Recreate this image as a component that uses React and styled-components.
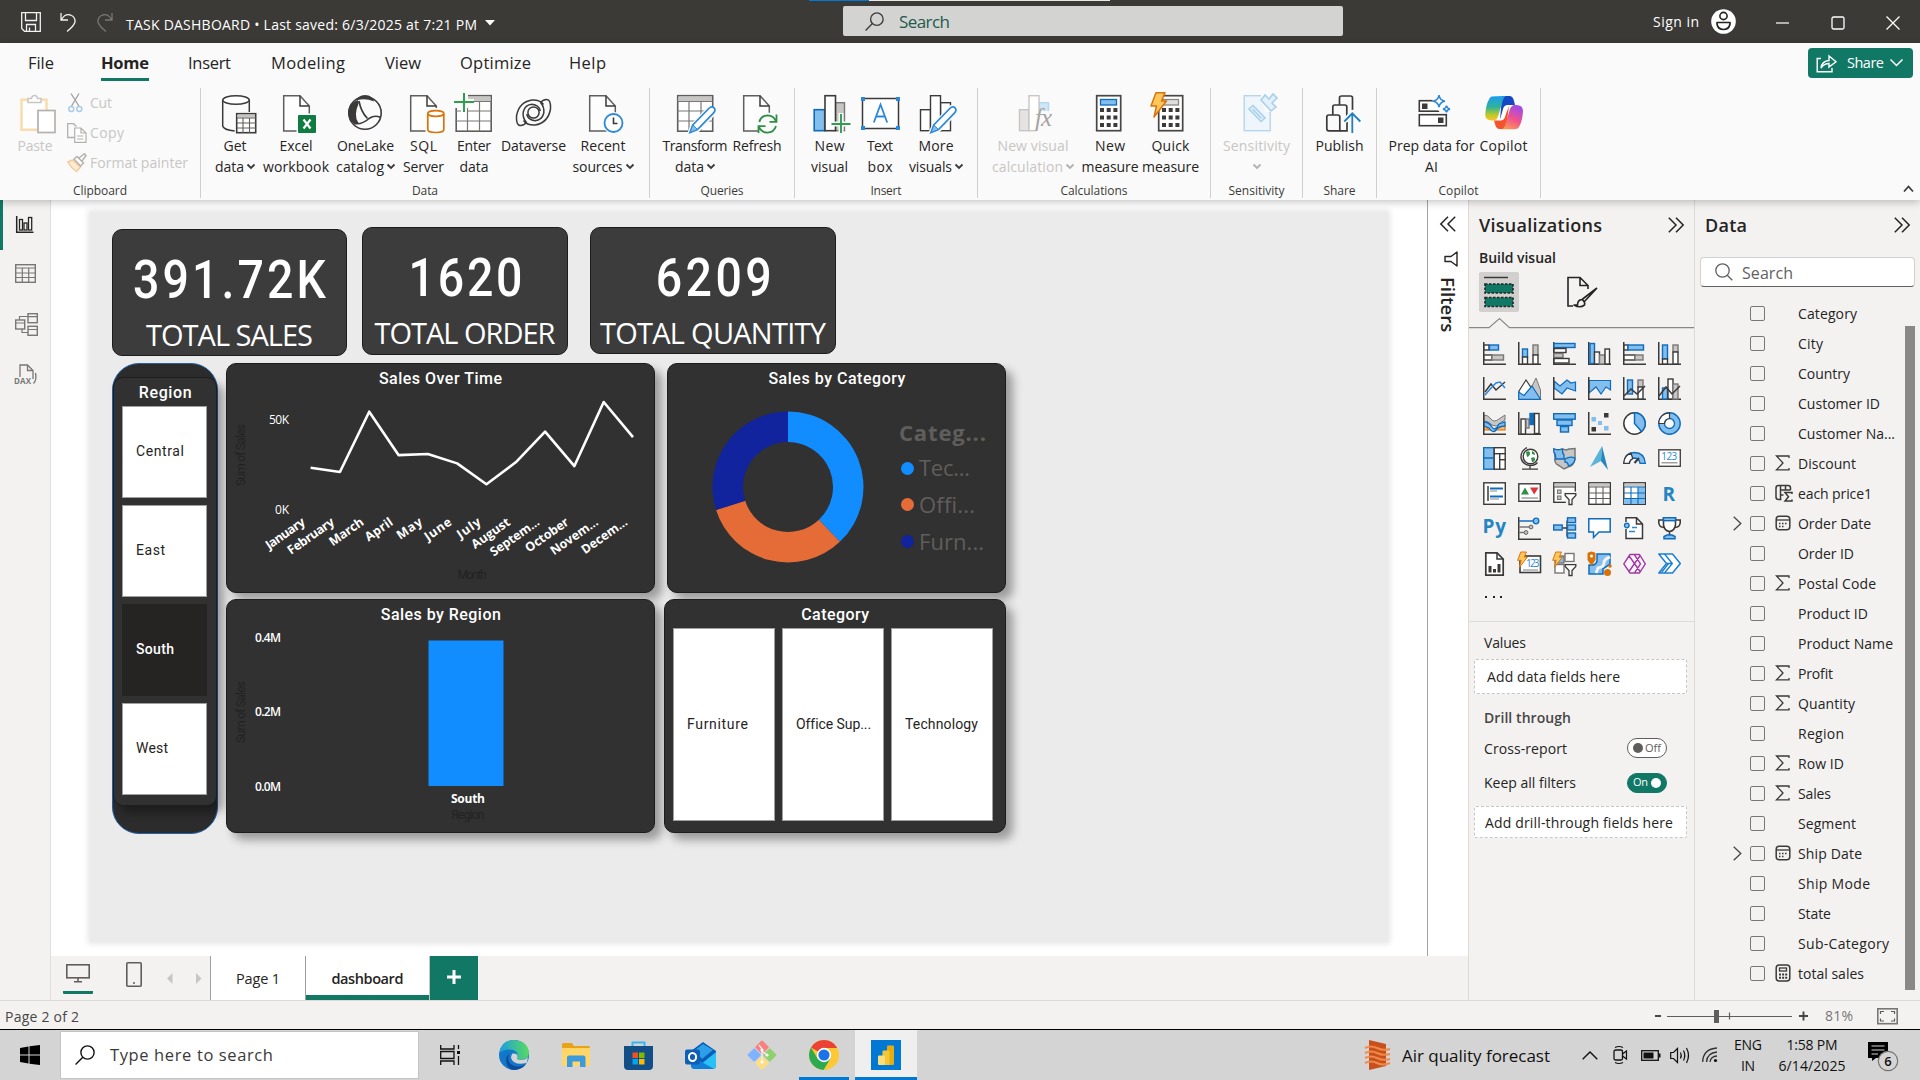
import React, { useLayoutEffect, useRef } from "react";
import styled, { createGlobalStyle, css } from "styled-components";

const INK = "#252423";
const DARK = "#3b3a39";
const GREEN = "#117865";
const PANEL = "#f3f2f1";
const BLUE = "#0f6cbd";
const SKY = "#83beec";
const GREY = "#c8c6c4";
const UI = '"Open Sans", "Noto Sans", sans-serif';
const DIN = 'Roboto, "Open Sans", sans-serif';

const Global = createGlobalStyle`
  * { box-sizing: border-box; }
  body { margin: 0; overflow: hidden; background: ${PANEL}; }
  #root { width: 1920px; height: 1080px; font-family: ${UI}; color: ${INK}; }
  svg { display: block; flex: none; overflow: visible; }
`;

/* ---------- text ---------- */

const TextSpan = styled.span`
  display: inline-block;
  flex: none;
  justify-self: start;
  white-space: pre;
  line-height: 1.36;
  font-family: ${(p) => (p.$din ? DIN : UI)};
  font-size: ${(p) => p.$size || 14}px;
  font-weight: ${(p) => p.$weight || 400};
  color: ${(p) => p.$color || "inherit"};
  margin-left: ${(p) => p.$ml || 0}px;
  padding-top: ${(p) => p.$drop || 0}px;
  ${(p) => p.$squeeze && css`transform: scaleX(${p.$squeeze});`}
`;

/* Tracks the text in or out so that it takes the given width. */
function Text({ fit, children, ...rest }) {
  const ref = useRef(null);
  const squeeze = rest.$squeeze || 1;
  useLayoutEffect(() => {
    const el = ref.current;
    if (!fit || !el) return;
    el.style.letterSpacing = "0px";
    const n = el.textContent.length;
    const s = (fit - el.getBoundingClientRect().width) / squeeze / Math.max(1, n - 1);
    el.style.letterSpacing = `${s}px`;
    el.style.marginRight = `${-s}px`;
  }, [fit, children, squeeze]);
  return (
    <TextSpan ref={ref} {...rest}>
      {children}
    </TextSpan>
  );
}

const VText = styled(TextSpan)`
  writing-mode: vertical-rl;
`;

/* ---------- shell ---------- */

const Window = styled.div`
  width: 1920px;
  height: 1080px;
  display: flex;
  flex-direction: column;
`;

const TitleBar = styled.header`
  height: 43px;
  flex: none;
  background: #3b3a37;
  color: #fff;
  display: flex;
  align-items: center;
  position: relative;
`;

const LoadStrip = styled.div`
  position: absolute;
  top: 0;
  left: 809px;
  width: 301px;
  height: 1px;
  background: linear-gradient(90deg, #0078d4 60px, #e8e8e8 60px);
`;

const Slot = styled.div`
  width: ${(p) => p.$w}px;
  margin-left: ${(p) => p.$ml || 0}px;
  margin-top: ${(p) => p.$mt || 0}px;
  flex: none;
  display: flex;
  align-items: center;
`;

const TitleSearch = styled.div`
  width: 500px;
  height: 30px;
  background: #d3d3d1;
  border-radius: 2px;
  display: flex;
  align-items: center;
  padding-left: 22px;
  gap: 15px;
  margin-top: -1px;
  color: #1f5a4d;
`;

const Ribbon = styled.section`
  height: 157px;
  flex: none;
  background: #fafafa;
  position: relative;
  z-index: 2;
  box-shadow: 0 2px 8px rgba(0, 0, 0, 0.24);
  display: flex;
  flex-direction: column;
`;

const TabRow = styled.nav`
  height: 45px;
  display: flex;
  align-items: flex-start;
  padding-left: 28px;
`;

const Tab = styled.div`
  width: ${(p) => p.$w}px;
  margin-right: ${(p) => p.$gap}px;
  height: 38px;
  padding-top: 9px;
  border-bottom: 3px solid ${(p) => (p.$active ? GREEN : "transparent")};
`;

const ShareButton = styled.button`
  width: 105px;
  height: 30px;
  margin: 5px 7px 0 auto;
  padding: 0 10px 0 8px;
  background: ${GREEN};
  border: 0;
  border-radius: 4px;
  color: #fff;
  display: flex;
  align-items: center;
  justify-content: space-between;
`;

const Groups = styled.div`
  flex: 1;
  display: flex;
  position: relative;
`;

const Group = styled.div`
  width: ${(p) => p.$w}px;
  height: 110px;
  border-right: 1px solid #d2d0ce;
  display: flex;
  flex-direction: column;
`;

const GroupItems = styled.div`
  height: 92px;
  padding-left: ${(p) => p.$pl}px;
  display: flex;
`;

const GroupCaption = styled.div`
  height: 18px;
  display: flex;
  justify-content: center;
  align-items: center;
  padding-top: 5px;
  margin-top: 2px;
  color: #3b3a39;
`;

const Item = styled.div`
  width: ${(p) => p.$w}px;
  flex: none;
  padding-top: 4px;
  display: flex;
  flex-direction: column;
  align-items: center;
  color: ${(p) => (p.$off ? "#c8c6c4" : "#252423")};
`;

const ItemLine = styled.div`
  height: 20px;
  display: flex;
  align-items: center;
  gap: 3px;
`;

const ClipCommands = styled.div`
  display: flex;
  flex-direction: column;
  margin-left: 9px;
  color: #c8c6c4;
`;

const ClipCommand = styled.div`
  height: 30px;
  display: flex;
  align-items: center;
  gap: 3px;
`;

const Collapse = styled.div`
  margin-left: auto;
  padding-right: 6px;
  align-self: flex-end;
  padding-bottom: 7px;
`;

const Body = styled.main`
  height: 800px;
  flex: none;
  display: flex;
`;

const Rail = styled.nav`
  width: 51px;
  background: ${PANEL};
  border-right: 1px solid #e1dfdd;
`;

const RailItem = styled.div`
  height: ${(p) => p.$h}px;
  display: flex;
  align-items: center;
  padding-left: 12px;
  border-left: 3px solid ${(p) => (p.$active ? GREEN : "transparent")};
`;

const Work = styled.div`
  width: 1417px;
  display: flex;
  flex-direction: column;
`;

const Stage = styled.div`
  height: 756px;
  display: flex;
  background: #fff;
`;

const CanvasArea = styled.div`
  width: 1377px;
  padding: 12px 0 0 39px;
  border-right: 1px solid #a5a4a2;
`;

/* The report page is a free canvas: each visual keeps the spot it was dropped on. */
const ReportPage = styled.div`
  width: 1298px;
  height: 730px;
  background: #ebebeb;
  box-shadow: 0 0 6px 2px #e6e6e6;
  position: relative;
`;

const Visual = styled.section`
  position: absolute;
  left: ${(p) => p.$box[0] - 90}px;
  top: ${(p) => p.$box[1] - 212}px;
  width: ${(p) => p.$box[2]}px;
  height: ${(p) => p.$box[3]}px;
  display: flex;
  flex-direction: column;
  border: 1px solid #1d1d1d;
  border-radius: 10px;
  background: #313131;
  box-shadow: 7px 7px 10px rgba(0, 0, 0, 0.34);
`;

const KpiCard = styled(Visual)`
  background: #3c3c3c;
  box-shadow: none;
  align-items: center;
  color: #fff;
`;

const KpiValue = styled.div`
  height: 50px;
  margin-top: 25px;
  display: flex;
  align-items: center;
`;

const KpiName = styled.div`
  height: 40px;
  margin-top: 10px;
  display: flex;
  align-items: center;
`;

const RoundedShape = styled(Visual)`
  border: 1px solid #1e62a8;
  border-radius: 27px;
  background: #2c2c2c;
  box-shadow: none;
`;

const VisualTitle = styled.div`
  height: 30px;
  flex: none;
  display: flex;
  align-items: center;
  justify-content: center;
  color: #fff;
`;

const TileList = styled.div`
  flex: 1;
  display: flex;
  flex-direction: ${(p) => (p.$row ? "row" : "column")};
  gap: ${(p) => p.$gap}px;
  margin-top: -2px;
  padding: ${(p) => p.$pad};
`;

const Tile = styled.div`
  flex: 1;
  display: flex;
  align-items: center;
  padding-left: 13px;
  background: ${(p) => (p.$on ? INK : "#fff")};
  color: ${(p) => (p.$on ? "#fff" : INK)};
  border: 1px solid ${(p) => (p.$on ? INK : "#a19f9d")};
`;

const DonutBody = styled.div`
  flex: 1;
  display: flex;
  padding: 17px 0 0 44px;
`;

const Legend = styled.div`
  padding: 5px 0 0 35px;
  display: flex;
  flex-direction: column;
  color: #605e5c;
`;

const LegendRow = styled.div`
  height: ${(p) => p.$h || 36.6}px;
  display: flex;
  align-items: center;
`;

const Dot = styled.i`
  width: 13px;
  height: 13px;
  border-radius: 50%;
  margin: 0 5px 0 2px;
  background: ${(p) => p.$c};
`;

const FilterRail = styled.aside`
  flex: 1;
  background: #fff;
  padding-top: 16px;
  display: flex;
  flex-direction: column;
  align-items: center;
`;

const PageTabs = styled.div`
  height: 44px;
  background: ${PANEL};
  display: flex;
`;

const ViewSwitch = styled.div`
  width: 159px;
  display: flex;
`;

const ViewMode = styled.div`
  width: 30px;
  height: 38px;
  margin-left: ${(p) => p.$ml}px;
  display: flex;
  justify-content: center;
  padding-top: ${(p) => p.$pt}px;
  border-bottom: 3px solid ${(p) => (p.$active ? GREEN : "transparent")};
  border-radius: 1px;
`;

const PageTab = styled.div`
  width: ${(p) => p.$w}px;
  background: #fff;
  border-left: 1px solid #a19f9d;
  display: flex;
  align-items: center;
  justify-content: center;
  padding-top: 2px;
  ${(p) => p.$active && css`box-shadow: inset 0 -5px 0 ${GREEN};`}
`;

const AddPage = styled.div`
  width: 49px;
  background: ${GREEN};
  border-left: 1px solid #c8c6c4;
  display: flex;
  justify-content: center;
  padding-top: 14px;
`;

const Pane = styled.aside`
  width: ${(p) => p.$w}px;
  background: ${PANEL};
  border-left: 1px solid #dddbd9;
  display: flex;
  flex-direction: column;
`;

const PaneHead = styled.div`
  height: 50px;
  flex: none;
  display: flex;
  align-items: center;
  justify-content: space-between;
  padding: 0 10px 0 10px;
`;

const BuildRow = styled.div`
  display: flex;
  padding: 5px 0 0 10px;
`;

const BuildTab = styled.div`
  width: 40px;
  height: 40px;
  margin-right: 43px;
  border-radius: 2px;
  background: ${(p) => (p.$active ? "#d2d0ce" : "transparent")};
  display: flex;
  align-items: center;
  justify-content: center;
`;

const IconGrid = styled.div`
  display: grid;
  grid-template-columns: repeat(6, 35px);
  grid-auto-rows: 35px;
  padding: 13px 0 0 14px;
  height: 259px;
`;

const Ellipsis = styled.div`
  height: 18px;
  padding-left: 16px;
  display: flex;
  gap: 5.5px;
  align-items: center;
  i {
    width: 2px;
    height: 2px;
    background: ${INK};
  }
`;

const Wells = styled.div`
  margin-top: 15px;
  border-top: 1px solid #dddbd9;
  padding: 10px 7px 0 5px;
  display: flex;
  flex-direction: column;
`;

const WellLabel = styled.div`
  height: ${(p) => p.$h}px;
  display: flex;
  align-items: center;
  justify-content: space-between;
  padding: 0 20px 0 10px;
`;

const Well = styled.div`
  height: ${(p) => p.$h}px;
  margin-top: ${(p) => p.$mt}px;
  background: #fff;
  border: 1px dashed #c8c6c4;
  border-radius: 2px;
  display: flex;
  align-items: center;
  padding-left: ${(p) => p.$pl}px;
`;

const Toggle = styled.div`
  width: 40px;
  height: 20px;
  border-radius: 10px;
  border: 1px solid ${(p) => (p.$on ? GREEN : "#605e5c")};
  background: ${(p) => (p.$on ? GREEN : "#fff")};
  color: ${(p) => (p.$on ? "#fff" : "#605e5c")};
  display: flex;
  flex-direction: ${(p) => (p.$on ? "row-reverse" : "row")};
  align-items: center;
  justify-content: space-between;
  padding: 0 5px;
  i {
    width: 10px;
    height: 10px;
    border-radius: 50%;
    background: currentColor;
  }
`;

const FieldSearch = styled.div`
  height: 30px;
  margin: 7px 5px 0 5px;
  background: #fff;
  border: 1px solid #d1d1d1;
  border-bottom-color: #616161;
  border-radius: 4px;
  display: flex;
  align-items: center;
  padding-left: 14px;
  gap: 9px;
  color: #616161;
`;

const FieldArea = styled.div`
  display: flex;
  justify-content: space-between;
  padding-right: 5px;
`;

const FieldList = styled.div`
  padding: 11px 0 0 38px;
`;

const Field = styled.div`
  height: 30px;
  display: grid;
  grid-template-columns: 17px 25px 23px auto;
  align-items: center;
`;

const Checkbox = styled.i`
  width: 15px;
  height: 15px;
  border: 1px solid #797775;
  border-radius: 2px;
`;

const Scroll = styled.div`
  width: 10px;
  height: 664px;
  margin-top: 39px;
  background: #8a8886;
`;

const StatusBar = styled.footer`
  height: 29px;
  flex: none;
  background: ${PANEL};
  border-top: 1px solid #dddbd9;
  display: flex;
  align-items: center;
  justify-content: space-between;
  padding: 2px 22px 0 5px;
  color: #484644;
`;

const Zoom = styled.div`
  display: flex;
  align-items: center;
`;

const Taskbar = styled.footer`
  height: 51px;
  flex: none;
  background: #d4d4d4;
  border-top: 1px solid #000;
  display: flex;
  align-items: center;
  color: #111;
`;

const TaskSearch = styled.div`
  width: 359px;
  height: 48px;
  margin-left: 20px;
  background: #fff;
  border: 1px solid #c4c4c4;
  display: flex;
  align-items: center;
  padding-left: 14px;
  gap: 15px;
`;

const TaskButton = styled.div`
  width: 62px;
  height: 50px;
  flex: none;
  display: flex;
  align-items: center;
  justify-content: center;
  background: ${(p) => (p.$active ? "#efefef" : "transparent")};
  ${(p) => p.$active && css`box-shadow: inset 0 -3px 0 #0078d4;`}
`;

const OpenMark = styled.div`
  width: 50px;
  height: 50px;
  display: flex;
  align-items: center;
  justify-content: center;
  box-shadow: inset 0 -3px 0 #0078d4;
`;

const Stack = styled.div`
  width: ${(p) => p.$w}px;
  margin-left: ${(p) => p.$ml}px;
  display: flex;
  flex-direction: column;
  align-items: center;
  gap: 2px;
`;

/* ---------- icon helpers ---------- */

const Svg = ({ w = 24, h = w, vb, children, ...r }) => (
  <svg width={w} height={h} viewBox={vb || `0 0 ${w} ${h}`} fill="none" {...r}>
    {children}
  </svg>
);
const P = ({ d, s = DARK, w = 1.5, f = "none", ...r }) => (
  <path d={d} stroke={s} strokeWidth={w} fill={f} {...r} />
);
const R = ({ b, s = DARK, w = 1.4, f = "none", ...r }) => (
  <rect x={b[0]} y={b[1]} width={b[2]} height={b[3]} stroke={s} strokeWidth={w} fill={f} {...r} />
);

const Chevron = ({ color = INK, w = 8, sw = 1.8 }) => (
  <Svg w={w} h={w * 0.6}>
    <P d={`M.5 .5L${w / 2} ${w * 0.5}L${w - 0.5} .5`} s={color} w={sw} />
  </Svg>
);
const Mirror = styled.div`
  transform: scaleX(-1);
`;
const Double = () => (
  <Svg w={16} h={16}>
    <P d="M.8 .8L8 8L.8 15.2M8 .8L15.2 8L8 15.2" s={INK} w={1.5} />
  </Svg>
);
const Lens = ({ w = 19, color = DARK, sw = 1.4 }) => (
  <Svg w={w} vb="0 0 20 20">
    <circle cx="12.5" cy="7.5" r="6.6" stroke={color} strokeWidth={sw} />
    <P d="M7.8 12.2L.6 19.4" s={color} w={sw} />
  </Svg>
);

/* ---------- ribbon icons, 44 x 44 ---------- */

const PageOutline = ({ x = 8 }) => (
  <>
    <P d={`M${x + 0.7} 3.7H${x + 17}L${x + 26.3} 14V39H${x + 0.7}Z`} f="#fdfdfd" s="#605e5c" w={1.5} />
    <P d={`M${x + 17} 3.7V14H${x + 26.3}`} s={DARK} />
  </>
);
const Pencil = () => (
  <g>
    <path d="M37 15.5L20 33L16.5 41L25 38L42 20Z" fill="#fafafa" stroke="#fafafa" strokeWidth="4" />
    <P d="M35.8 16.5q3-2.8 5.2-.6t-.6 5.2L24.5 37.5L17 40.5L19.8 33Z" f="#fff" s="#2b88d8" w={1.7} />
    <path d="M19.8 33L24.5 37.5L17 40.5Z" fill={SKY} stroke="#2b88d8" />
  </g>
);
const Table = ({ x = 4, head = GREY }) => (
  <g>
    <R b={[x + 0.7, 3.7, 35, 35.5]} f="#fff" s="#605e5c" w={1.6} />
    <rect x={x + 1.5} y="4.5" width="33.5" height="4.5" fill={head} />
    <P d={`M${x} 9.5H${x + 36}M${x} 19H${x + 36}M${x} 29H${x + 36}M${x + 12} 9.5V39M${x + 24} 9.5V39`} s="#797775" w={1.2} />
  </g>
);
const Calc = ({ x = 8, head = SKY, hs = BLUE }) => (
  <g>
    <R b={[x + 0.7, 3.7, 24, 35]} f="#fff" s="#484644" w={1.7} />
    <R b={[x + 4.5, 7.5, 16, 5.5]} f={head} s={hs} w={1.3} />
    {[16, 23.5, 31].map((y) =>
      [4, 10.7, 17.4].map((dx) => <rect key={`${y}${dx}`} x={x + dx} y={y} width="4" height="4" fill="#3b3a39" />)
    )}
  </g>
);
const Bolt = ({ t }) => (
  <path transform={t} d="M6 .8H15L11.5 9H16.5L4 25L6.5 14H1Z" fill="#ffc65a" stroke="#d8730a" strokeWidth="1.5" strokeLinejoin="round" />
);

const swirl = "M31.5 12.5Q28 7.6 20 8Q7 10 4.5 24Q4 33.8 8.5 33.5Q12.3 33.3 14.3 30.3Q10.5 26 11.2 20Q13 12.8 20 12.3Q27 13 28.3 19";

const ribbon = {
  getData: (
    <>
      <P d="M9.7 8V34q1 4 12 5M36.3 8V20" />
      <ellipse cx="23" cy="8" rx="13.3" ry="4.3" stroke={DARK} strokeWidth="1.5" fill="#fff" />
      <R b={[23.7, 21.7, 19, 19]} f="#fff" w={1.6} />
      <rect x="24.5" y="22.5" width="17.5" height="3" fill={GREY} />
      <P d="M24 26H43M24 31H43M24 36H43M30 26V41M36.5 26V41" s="#605e5c" w={1.1} />
    </>
  ),
  excel: (
    <>
      <PageOutline x={9} />
      <rect x="22.5" y="21.5" width="21" height="21" fill="#fafafa" />
      <rect x="24" y="23" width="18" height="18" rx="1" fill="#107c41" />
      <P d="M29.5 27.5L36.5 36.5M36.5 27.5L29.5 36.5" s="#fff" w={2.2} />
    </>
  ),
  onelake: (
    <>
      <circle cx="21" cy="21" r="16.2" stroke={DARK} strokeWidth="1.6" />
      <path d="M12.500 8.500Q13.500 3.500 21 3Q29 3.500 30 9.500Q21 5.500 12.500 8.500Z" fill={DARK} />
      <path d="M13.500 8Q5 11 4 20Q4.500 28 10.500 32L14.500 31Q9 24 15 10.500Z" fill={DARK} />
      <P d="M15 9Q17 20 23.500 26.500" w={1.600} />
      <P d="M10 31.500Q18 33 25 26.500Q31 22.500 36.500 25.500" w={1.600} />
    </>
  ),
  sql: (
    <>
      <PageOutline />
      <rect x="23.5" y="16" width="20" height="27" fill="#fafafa" />
      <P d="M25.8 21.5V37.5q0 3 8 3t8-3V21.5" s="#d8730a" w={1.7} f="#fff" />
      <ellipse cx="33.8" cy="21.5" rx="8" ry="2.8" stroke="#d8730a" strokeWidth="1.7" fill="#fff" />
    </>
  ),
  enter: (
    <>
      <Table x={3.5} />
      <path d="M2 0H16V16H2Z" fill="#fafafa" />
      <path d="M12 1V20M2 10H22" stroke="#fafafa" strokeWidth="6" />
      <P d="M12 1V20M2 10H22" s="#2f9e4f" w={2} />
    </>
  ),
  dataverse: (
    <g stroke={DARK} strokeWidth="1.5">
      <circle cx="21.5" cy="20.500" r="5.600" />
      <path d={swirl} />
      <path d={swirl} transform="rotate(180 21.5 20.500)" />
    </g>
  ),
  recent: (
    <>
      <PageOutline />
      <circle cx="32.5" cy="31" r="11" fill="#fafafa" />
      <circle cx="32.5" cy="31" r="9" fill="#fff" stroke="#2b88d8" strokeWidth="1.8" />
      <P d="M32.5 25.5V31.5H36.5" w={1.6} />
    </>
  ),
  transform: (
    <>
      <Table x={4} />
      <Pencil />
    </>
  ),
  refresh: (
    <>
      <PageOutline />
      <circle cx="32.5" cy="32" r="11.5" fill="#fafafa" />
      <P d="M24.3 30Q26 23.5 32.5 23.3Q39 23.5 41 29.5M41.5 22.5V29.8H34.5M41 34Q39 40.5 32.5 40.7Q26 40.5 24 34.8M23.5 41V34.2H30.5" s="#2f8f46" w={1.8} />
    </>
  ),
  newVisual: (
    <>
      <R b={[6.2, 17.7, 10.5, 21]} f={SKY} s={BLUE} w={1.6} />
      <R b={[27.5, 10.7, 9, 28]} f={GREY} s="#797775" />
      <R b={[17, 3.7, 10.5, 35]} f="#fff" w={1.6} />
      <path d="M33 21V43M23 32H43" stroke="#fafafa" strokeWidth="5" />
      <P d="M33 22V41M23.5 32H42.5" s="#2f9e4f" w={1.9} />
    </>
  ),
  textBox: (
    <>
      <R b={[4.5, 6.5, 36, 30]} f="#fff" w={1.5} />
      {[[3, 5], [38, 5], [3, 34], [38, 34]].map(([x, y]) => (
        <rect key={`${x}${y}`} x={x} y={y} width="4" height="4" fill="#2b88d8" />
      ))}
      <P d="M15.8 30.5L22.5 12.5L29.2 30.5M18.2 24.5H26.8" s="#2b88d8" w={1.8} />
    </>
  ),
  moreVisuals: (
    <>
      <R b={[6.5, 17.7, 10, 21]} f="#fff" />
      <R b={[26.5, 10.7, 10, 28]} f="#fff" />
      <R b={[16.5, 3.7, 10, 35]} f="#fff" />
      <Pencil />
    </>
  ),
  newCalc: (
    <>
      <R b={[8.5, 17.7, 9.5, 21]} f="#e6e4e2" s="#c8c6c4" />
      <R b={[28, 10.7, 9.5, 14]} f="#cfe6f7" s="#b5d6ee" />
      <R b={[18, 3.7, 10, 35]} f="#fff" s="#c8c6c4" />
      <rect x="25" y="19" width="18" height="22" fill="#fafafa" />
      <text x="24" y="34" fontFamily="Liberation Serif, serif" fontStyle="italic" fontSize="25" fill="#a6a4a2" textLength="17">fx</text>
    </>
  ),
  measure: <Calc />,
  quick: (
    <>
      <Calc x={9} head="#e1dfdd" hs="#8a8886" />
      <Bolt t="translate(1 0)" />
    </>
  ),
  sensitivity: (
    <>
      <R b={[9.2, 3.7, 26, 35]} f="#eef6fb" s="#b5d6ee" />
      <path d="M25 0H44V20H30Z" fill="#fafafa" />
      <P d="M14 17L18 13.5L30 26L26 29.5ZM17.5 17L26.5 26.5M26 8L30 3L34 7L38 2L42 6L37 11L41 15L36 19Z" s="#a9d0ea" w={1.6} f="#e3f1fa" />
    </>
  ),
  publish: (
    <>
      <path d="M8.8 37V25q0-2 2-2h9q2 0 2 2V38.8H10.8q-2 0-2-2Z" stroke={DARK} strokeWidth="1.7" />
      <P d="M14.8 23V15q0-2 2-2h10q2 0 2 2V26M21.8 38.8H29V30M21.5 13V6q0-2 2-2h9q2 0 2 2V18" w={1.7} />
      <path d="M34.3 20V42M26 29.5L34.3 21L42.6 29.5" stroke="#fafafa" strokeWidth="5" />
      <P d="M34.3 21V41M26.3 29.5L34.3 21.3L42.3 29.5" s="#1f7fbf" w={1.8} />
    </>
  ),
  prep: (
    <>
      <R b={[9.3, 8.7, 27, 10.5]} f="#fff" w={1.6} />
      <R b={[9.3, 22.7, 27, 11]} f="#fff" w={1.6} />
      <rect x="12" y="11.5" width="5.5" height="5.5" fill={DARK} />
      <rect x="28" y="25.5" width="5.5" height="5.5" fill={DARK} />
      <path d="M20 4H42V21H30Z" fill="#fafafa" />
      <P d="M29 3.2Q29.8 8.5 35 9.2Q29.8 10 29 15.2Q28.2 10 23 9.2Q28.2 8.5 29 3.2ZM36.5 13.5Q37 16.6 40 17Q37 17.5 36.5 20.5Q36 17.5 33 17Q36 16.6 36.5 13.5Z" s="#2b88d8" w={1.5} />
    </>
  ),
  copilot: (
    <>
      <defs>
        <linearGradient id="cpA" x1="0" y1="0" x2="0" y2="1">
          <stop offset="0" stopColor="#1a9cf0" />
          <stop offset="0.45" stopColor="#2fb39a" />
          <stop offset="0.75" stopColor="#b5c92e" />
          <stop offset="1" stopColor="#ffc41f" />
        </linearGradient>
        <linearGradient id="cpB" x1="0.6" y1="0" x2="0.2" y2="1">
          <stop offset="0" stopColor="#a14be8" />
          <stop offset="0.5" stopColor="#ee5091" />
          <stop offset="1" stopColor="#ff9a52" />
        </linearGradient>
      </defs>
      <path d="M20 4H28Q31 4.5 32 9L33 13H26Q22 13 21 17L18 28Z" fill="#1647c4" />
      <path d="M10 4.500Q12 4 24 4Q21.500 5 20 11L16.500 23Q15 28.500 11 28.500Q3 29 3.200 22Q4 12 7.500 6.500Q8.500 4.700 10 4.500Z" fill="url(#cpA)" />
      <path d="M24 37H17Q14 36.500 13 32L12 28.500H18Q22 28 23 24L27 14Z" fill="#f2552c" />
      <path d="M34 37Q32 37.300 20 37.300Q22.500 36 24 30.500L27.500 18.500Q29 13 33 13Q41 12.500 41 19Q40.500 29 37 35Q36 36.800 34 37Z" fill="url(#cpB)" />
      <path d="M22 17Q23 13 26.500 13L22.500 26Q21.500 28.500 18 28.500Z" fill="#fff" />
    </>
  ),
};

/* [icon, width, line one, its width, line two, its width, chevron, disabled] */
const GROUPS = [
  { w: 449, pl: 4, name: "Data", nw: 26, items: [
    ["getData", 60, "Get", 23, "data", 29, true],
    ["excel", 62, "Excel", 33, "workbook", 66],
    ["onelake", 77, "OneLake", 57, "catalog", 48, true],
    ["sql", 39, "SQL", 27, "Server", 41],
    ["enter", 62, "Enter", 34, "data", 29],
    ["dataverse", 57, "Dataverse", 65, "", 0],
    ["recent", 82, "Recent", 45, "sources", 50, true] ] },
  { w: 145, pl: 10, name: "Queries", nw: 43, items: [
    ["transform", 70, "Transform", 65, "data", 29, true],
    ["refresh", 54, "Refresh", 49, "", 0] ] },
  { w: 183, pl: 10, name: "Insert", nw: 31, items: [
    ["newVisual", 49, "New", 30, "visual", 37],
    ["textBox", 52, "Text", 26, "box", 25],
    ["moreVisuals", 60, "More", 35, "visuals", 43, true] ] },
  { w: 233, pl: 10, name: "Calculations", nw: 67, items: [
    ["newCalc", 90, "New visual", 71, "calculation", 71, true, true],
    ["measure", 64, "New", 30, "measure", 57],
    ["quick", 57, "Quick", 38, "measure", 57] ] },
  { w: 92, pl: 0, name: "Sensitivity", nw: 56, items: [["sensitivity", 91, "Sensitivity", 67, "", 0, true, true]] },
  { w: 74, pl: 0, name: "Share", nw: 32, items: [["publish", 73, "Publish", 48, "", 0]] },
  { w: 164, pl: 12, name: "Copilot", nw: 40, items: [
    ["prep", 85, "Prep data for", 86, "AI", 13],
    ["copilot", 59, "Copilot", 48, "", 0] ] },
];

/* ---------- visual gallery icons, 24 x 24 ---------- */

const Ax = <P d="M.75 0V22.2H23" w={1.5} />;
const bl = { f: SKY, s: BLUE };
const gr = { f: GREY, s: "#797775" };
const wh = { f: "#fff", s: DARK };
const Funnel = ({ t }) => (
  <path transform={t} d="M.7 .7H11.300V2.500L7.500 6.500V11.500H4.500V6.500L.7 2.500Z" fill="#fff" stroke={DARK} strokeWidth="1.3" />
);
const N123 = ({ x, y, size = 10, len = 16 }) => (
  <text x={x} y={y} fontFamily="Open Sans, sans-serif" fontSize={size} fill="#2b88d8" textLength={len}>123</text>
);

const gallery = [
  <>{Ax}<R b={[1, 3, 5, 5]} {...wh} /><R b={[6.5, 3, 9, 5]} {...bl} /><R b={[1, 13, 8, 5]} {...wh} /><R b={[9, 13, 11.500, 5]} {...gr} /></>,
  <>{Ax}<R b={[4.500, 7, 5, 8]} {...bl} /><R b={[4.500, 15, 5, 7]} {...wh} /><R b={[15, 3, 5, 10]} {...gr} /><R b={[15, 13, 5, 9]} {...wh} /></>,
  <>{Ax}<R b={[1, 1.500, 21, 4]} {...bl} /><R b={[1, 6.500, 12, 4]} {...wh} /><R b={[1, 11.500, 9, 4]} {...gr} /><R b={[1, 16.500, 15, 4.500]} {...wh} /></>,
  <>{Ax}<R b={[2, 1.500, 4.500, 20]} {...bl} /><R b={[6.500, 10, 5, 12]} {...wh} /><R b={[11.500, 13, 5.500, 9]} {...gr} /><R b={[17, 7, 4.500, 15]} {...wh} /></>,
  <>{Ax}<R b={[1, 3, 4, 5]} {...wh} /><R b={[5, 3, 15.500, 5]} {...bl} /><R b={[1, 13, 11, 5]} {...wh} /><R b={[12, 13, 8, 5]} {...gr} /></>,
  <>{Ax}<R b={[4.500, 3, 5, 14]} {...bl} /><R b={[4.500, 17, 5, 5]} {...wh} /><R b={[15, 3, 5, 7]} {...gr} /><R b={[15, 10, 5, 12]} {...wh} /></>,

  <>{Ax}<P d="M2 15L8 7L13 13L22 5" /><P d="M2 18L9 10L13 6L17 5L22 11" s="#2b88d8" /></>,
  <><P d="M13 11L18 1L22.500 13V22L15 17Z" f={GREY} s="#797775" w={1} /><P d="M1 14L8 3L14 12L8 18L1 20Z" f="#fff" w={1.200} /><P d="M.7 22.300V15L6 18.500L14 9L22.500 22.300Z" f={SKY} s={BLUE} w={1.200} /></>,
  <><P d="M1 4L7 9L14 3L18 6L22.500 5V14L14 11L9 17L1 11Z" f={SKY} s={BLUE} w={1.200} />{Ax}</>,
  <><P d="M1 3.500H22.500V13L18 10L13 17L8 10L1 16Z" f={SKY} s={BLUE} w={1.200} />{Ax}</>,
  <>{Ax}<R b={[4.500, 3, 5, 14]} {...bl} /><R b={[15, 3, 5, 7]} {...gr} /><R b={[15, 10, 5, 12]} {...wh} /><P d="M1 19L8 12L14 17L22 9" /></>,
  <>{Ax}<R b={[4.500, 11, 5, 11]} {...bl} /><R b={[10, 2, 5, 20]} {...wh} /><R b={[15, 7, 5, 15]} {...gr} /><P d="M1 19L8 10L14 17L22 9" /></>,

  <><P d="M1 3Q5 3 8 7T16 7L22 3V8Q18 10 15 13T5 10L1 9Z" f={GREY} s="#797775" w={1} /><P d="M1 12Q6 20 11 17T22 13V18H1Z" f="#fdb45b" s="#d8730a" w={1.200} /><P d="M1 10Q6 10 9 15T16 12L22 10V14Q16 14 13 18T6 16L1 14Z" f={SKY} s={BLUE} w={1.300} />{Ax}</>,
  <>{Ax}<R b={[3, 7, 4.500, 15]} {...wh} /><R b={[8, 7, 3, 9]} {...gr} /><R b={[12, 1.500, 4, 11]} f={BLUE} s={BLUE} /><R b={[16.500, 1.500, 4.500, 20]} {...wh} /></>,
  <><R b={[.7, 1.700, 21.500, 5.500]} {...bl} /><R b={[4, 8, 15, 5.500]} {...bl} /><R b={[7.500, 14.500, 8, 5.500]} {...bl} /></>,
  <>{Ax}<path d="M16 1h4.500v4.500H16ZM3.500 15H8v4.500H3.500Z" fill={DARK} /><path d="M3.500 5H8v4.500H3.500ZM10 9h4v4h-4ZM16 14h4.500v4.500H16Z" fill={SKY} /></>,
  <><circle cx="11.500" cy="11.500" r="10.700" fill="#fff" stroke={DARK} strokeWidth="1.500" /><P d="M11.500 .8A10.700 10.700 0 0 1 18.500 19.500L11.500 11.500Z" f={SKY} s={BLUE} /></>,
  <><circle cx="11.500" cy="11.500" r="7.800" stroke={SKY} strokeWidth="6" /><circle cx="11.500" cy="11.500" r="10.700" stroke={BLUE} strokeWidth="1.400" /><circle cx="11.500" cy="11.500" r="5" fill="#f8f8f8" stroke={BLUE} strokeWidth="1.300" /><P d="M.8 11.500A10.700 10.700 0 0 1 11.500 .8V6.500A5 5 0 0 0 6.500 11.500Z" w={1.200} f="#fff" /></>,

  <><R b={[.7, .7, 10.500, 21.500]} {...bl} /><R b={[11.200, .7, 11, 6]} {...wh} /><R b={[11.200, 6.700, 5.500, 15.500]} {...wh} /><R b={[16.700, 6.700, 5.500, 6]} {...wh} /><R b={[16.700, 12.700, 5.500, 9.500]} {...wh} /><P d="M1 11H11" s={BLUE} /></>,
  <><circle cx="12.500" cy="9.500" r="7.300" fill="#fff" stroke={DARK} strokeWidth="1.400" /><path d="M8 5Q12 3 12 6T9 10ZM13 11Q17 9 17 12T14 15ZM14 4q3 1 3 4l-3-1Z" fill="#2f8f46" /><P d="M9 .7Q2.500 3.500 3 11Q4.500 17.500 12 18.500Q17 18.500 19.500 15.500M12 18.500V22M4 22.200H20" w={1.300} /></>,
  <><P d="M1 2Q5 4 9 2L13 3L16 2L22 1.500V12Q21 19 15 20L11 22L5 18Q1 16 2 11Z" f={GREY} s="#797775" /><P d="M.8 2Q5 3.500 9.500 2Q9 6 11 8V12H2.500Q3 7 .8 5ZM12 12Q17 9 22 11Q22 17 15.500 19Q15 15 12 15Z" f={SKY} s={BLUE} w={1.300} /></>,
  <><path d="M14 -1L2 20L13 14Z" fill="#59b4d9" /><path d="M14 -1L20 23L13 14Z" fill="#2386c0" /></>,
  <><P d="M.8 16.300Q1.500 5.800 11.500 5.500Q21.500 5.800 22.300 16.300H17Q16.500 11.500 11.500 11Q7 11.500 6.300 16.300Z" f={SKY} s={BLUE} w={1.300} /><P d="M.8 16.300Q1 8.500 8 6.200L9.800 11.500Q6.500 13 6.300 16.300Z" f="#fff" w={1.300} /><P d="M11.500 16L16 11" w={2} /></>,
  <><R b={[.8, 2.800, 21.500, 16.500]} f="#fff" s="#484644" /><N123 x={3.300} y={12.500} /><P d="M3.500 15.800H19.500" s="#8a8886" w={1.200} /></>,

  <><R b={[.8, .8, 21.500, 21.500]} f="#fff" /><P d="M5 4V19" w={1.500} /><P d="M7 6.500H20M7 14.500H20" s={BLUE} w={2} /><P d="M7 9H14M7 17H16" s="#8a8886" w={1} /></>,
  <><R b={[.8, 1.800, 21.500, 17.500]} f="#fff" /><path d="M3 12.500L7 5.500L11 12.500Z" fill="#2f8f46" /><path d="M12 5.500H20.500L16.200 12.500Z" fill="#e0343c" /><P d="M3.500 16H20" s="#8a8886" w={1.200} /></>,
  <><R b={[.8, .8, 21.500, 19.500]} f="#fff" /><rect x="1.500" y="1.500" width="20" height="3" fill={GREY} /><P d="M1 5H22" s="#605e5c" w={1.200} /><R b={[4.500, 8, 3.500, 3.500]} {...gr} w={1.100} /><R b={[4.500, 14, 3.500, 3.500]} {...gr} w={1.100} /><path d="M9.500 9.500H24V24H14Z" fill={PANEL} /><Funnel t="translate(11.500 11)" /></>,
  <><R b={[.8, .8, 21.500, 21.500]} f="#fff" /><rect x="1.500" y="1.500" width="20" height="3" fill={GREY} /><P d="M1 5H22M1 11H22M1 16.500H22M8 5V22M15 5V22" s="#605e5c" w={1.100} /></>,
  <><R b={[.8, .8, 21.500, 21.500]} f="#fff" /><rect x="1.500" y="1.500" width="20" height="3" fill={GREY} /><path d="M15 5h7v17H1v-5.500h14Z" fill={SKY} /><P d="M1 5H22M1 11H22M1 16.500H22M8 5V22M15 5V22" s={BLUE} w={1.100} /></>,
  <text x="4.500" y="18.500" fontFamily="Open Sans, sans-serif" fontWeight="700" fontSize="19" fill="#2386c0" textLength="12">R</text>,

  <text x="-.5" y="15.500" fontFamily="Open Sans, sans-serif" fontWeight="700" fontSize="19" fill="#2386c0" textLength="23.500">Py</text>,
  <>{Ax}<P d="M1 4H15" s={BLUE} /><circle cx="18" cy="4" r="2.800" fill={SKY} stroke={BLUE} strokeWidth="1.300" /><P d="M1 10H11M1 15.500H6" s="#797775" w={1.300} /><circle cx="13" cy="10" r="1.900" fill={GREY} stroke="#605e5c" /><circle cx="8" cy="15.500" r="1.900" fill={GREY} stroke="#605e5c" /></>,
  <><P d="M9 11H14M14 3.500V19H16M14 3.500H16M14 11H16" w={1.300} /><R b={[.7, 8, 8.500, 5]} {...bl} /><R b={[14.500, .8, 8, 4.800]} {...bl} /><R b={[14.500, 8, 8, 5]} {...bl} /><R b={[14.500, 16, 8, 5]} {...bl} /></>,
  <P d="M.8 1.800H22.200V15H11L5.500 20.500V15H.8Z" f="#fff" s={BLUE} />,
  <><P d="M3 5V.8H13.500L19.500 7V21.500H3V12" f="#fff" /><P d="M13.500 .8V7H19.500" /><circle cx="3.800" cy="8.500" r="2.300" fill={SKY} stroke={BLUE} strokeWidth="1.300" /><P d="M9 10.500H14M6 14.500H12" s="#2b88d8" /></>,
  <><P d="M5.500 1V8Q6.500 14 11.500 14.500Q16.500 14 17.500 8V1ZM5.500 3H.8V6Q1.500 10.500 6 10.500M17.500 3H22.200V6Q21.500 10.500 17 10.500M11.500 14.500V18" f="#fff" w={1.600} /><R b={[5.500, .7, 12, 3]} {...bl} /><P d="M6 21.700V19.500L9 18H14L17 19.500V21.700Z" f={SKY} s={BLUE} /></>,

  <><P d="M2.800 .8H14L20.200 7V23.200H2.800Z" f="#fff" w={1.700} /><P d="M14 .8V7H20.200" /><path d="M5.500 14H8.500V20.500H5.500ZM10 17h3v3.500h-3ZM14.500 12h3v8.500h-3Z" fill={DARK} /></>,
  <><R b={[2, 4, 20.500, 16.500]} f="#fff" w={1.600} /><N123 x={8} y={15} len={13.500} /><P d="M5 18H20" s="#8a8886" w={1.100} /><Bolt t="translate(-1 -.5) scale(.63)" /></>,
  <><R b={[12, 1.500, 9, 8]} s="#797775" f="#fff" /><R b={[2, 12.500, 9, 8.500]} s="#797775" f="#fff" /><R b={[2, 4, 9, 7]} f={SKY} s="#797775" /><path d="M11.500 10.500H24V24H14Z" fill={PANEL} /><Funnel t="translate(11.500 12)" /><Bolt t="translate(-1 -.5) scale(.63)" /></>,
  <><P d="M9 2H22V12L15 17V22H1V13Q8 14 9 9Z" f={SKY} s={BLUE} /><P d="M22 5Q16 7 16 11T10 16L8 21" s="#f3f2f1" w={3} /><path d="M-.5 1Q3.500 -2 7.500 1V8L3.500 14L-.5 8Z" fill="#d8730a" /><circle cx="3.500" cy="4" r="1.500" fill="#fff" /><circle cx="19.500" cy="20.500" r="3.500" fill="#d8730a" /><circle cx="22" cy="14" r="1.800" fill="#d8730a" /></>,
  <P d="M7 2.500H16.500L22.300 11.800L16.500 21H7L.8 11.800ZM6.200 4L17 19.500M16.800 4L6 19.500M11.500 2.800L17.500 11.800L11.500 20.800M11.500 2.800" s="#9f3aa0" f="#fbf2fb" w={1.400} strokeLinejoin="round" />,
  <><P d="M.8 2H14.500L22.300 11.500L14.500 21H.8L8.500 11.500Z" s="#1a7fd4" f="#fff" strokeLinejoin="round" /><P d="M6.500 2L14.300 11.500L6.500 21M8.500 11.500H14M10.500 11.500L3.500 20.500" s="#1a7fd4" w={1.400} /></>,
];

/* ---------- field list ---------- */

const fieldIcon = {
  sum: <Svg w={15} h={16}><P d="M14 3V1H1.500L8 8L1.500 14.800H14V13" s="#3b3a39" w={1.300} /></Svg>,
  cal: <Svg w={17} h={17}><R b={[1.200, 1.200, 13.600, 13.600]} rx="3" w={1.500} /><P d="M1.500 5H14.500" w={1.300} /><P d="M4 8.500h1.500M7 8.500h1.500M10 8.500h1.500M4 11.500h1.500M7 11.500h1.500" w={1.500} /></Svg>,
  col: <Svg w={18} h={18}><P d="M15.500 6V4q0-2.500-2.500-2.500H3.500Q1 1.500 1 4v9q0 2.500 2.500 2.500H6.500M5.500 1.500V15M5.500 6H15.500M10.500 1.500V6M5.500 11H8.500" w={1.500} /><P d="M17 10V8.500H10L13.500 12.700L10 17H17V15.500" w={1.500} /></Svg>,
  calc: <Svg w={17} h={18}><R b={[1.200, 1, 13.600, 16]} rx="3" w={1.500} /><R b={[4.500, 4, 7, 3]} w={1.300} /><P d="M4 10.500h2M7.100 10.500h2M10.200 10.500h2M4 13.700h2M7.100 13.700h2M10.200 13.700h2" w={2} /></Svg>,
};

const FIELDS = [
  ["Category", 59], ["City", 25], ["Country", 52], ["Customer ID", 82], ["Customer Na...", 97],
  ["Discount", 58, "sum"], ["each price1", 74, "col"], ["Order Date", 73, "cal", true], ["Order ID", 56],
  ["Postal Code", 78, "sum"], ["Product ID", 70], ["Product Name", 95], ["Profit", 35, "sum"],
  ["Quantity", 57, "sum"], ["Region", 46], ["Row ID", 46, "sum"], ["Sales", 33, "sum"], ["Segment", 58],
  ["Ship Date", 64, "cal", true], ["Ship Mode", 72], ["State", 33], ["Sub-Category", 91], ["total sales", 66, "calc"],
];

/* ---------- charts ---------- */

const MONTHS = [
  ["January", 23.5, 45], ["February", 21.1, 54], ["March", 54.6, 39], ["April", 30.5, 31], ["May", 31.1, 28], ["June", 25.9, 30],
  ["July", 14.3, 26], ["August", 26.5, 44], ["Septem...", 43.5, 57], ["October", 24.4, 50], ["Novem...", 60, 55], ["Decem...", 40.5, 53],
];

const AxisName = ({ x, y, rotate, len, children }) => (
  <text x={x} y={y} transform={rotate ? `rotate(-90 ${x} ${y})` : undefined} textAnchor="middle" dominantBaseline="middle"
    fontFamily={DIN} fontSize="12" fill="#232323" textLength={len}>{children}</text>
);

function LineChart() {
  const pts = MONTHS.map(([, v], i) => `${83.6 + i * 29.31},${116 - v * 1.8}`).join(" ");
  return (
    <Svg w={427} h={197}>
      <text x="62" y="30" textAnchor="end" fontFamily={UI} fontSize="12" fill="#fff" textLength="20">50K</text>
      <text x="62" y="120" textAnchor="end" fontFamily={UI} fontSize="12" fill="#fff" textLength="14">0K</text>
      <polyline points={pts} stroke="#fff" strokeWidth="2.6" strokeLinejoin="round" />
      {MONTHS.map(([m, , len], i) => {
        const x = 79 + i * 29.31;
        return (
          <text key={m} x={x} y="130" transform={`rotate(-35 ${x} 130)`} textAnchor="end" fontFamily={UI} fontWeight="700"
            fontSize="12.5" fill="#fff" textLength={len}>{m}</text>
        );
      })}
      <AxisName x={15} y={61} rotate len={78 - 16}>Sum of Sales</AxisName>
      <AxisName x={245} y={182} len={29}>Month</AxisName>
    </Svg>
  );
}

function BarChart() {
  return (
    <Svg w={427} h={201}>
      {[["0.4M", 7], ["0.2M", 81], ["0.0M", 156]].map(([t, y]) => (
        <text key={t} x="54" y={y + 4.5} textAnchor="end" fontFamily={UI} fontSize="12" fontWeight="600" fill="#fff" textLength="26">{t}</text>
      ))}
      <rect x="201.500" y="10.500" width="75" height="145.500" fill="#118dff" />
      <text x="241" y="172.500" textAnchor="middle" fontFamily={UI} fontSize="12" fontWeight="700" fill="#fff" textLength="34">South</text>
      <AxisName x={15} y={82} rotate len={62}>Sum of Sales</AxisName>
      <AxisName x={241} y={186} len={33}>Region</AxisName>
    </Svg>
  );
}

const arc = (a0, a1, r1 = 75.5, r0 = 45, c = 76) => {
  const pt = (a, r) => `${c + r * Math.sin((a * Math.PI) / 180)} ${c - r * Math.cos((a * Math.PI) / 180)}`;
  return `M${pt(a0, r1)}A${r1} ${r1} 0 0 1 ${pt(a1, r1)}L${pt(a1, r0)}A${r0} ${r0} 0 0 0 ${pt(a0, r0)}Z`;
};

/* ---------- taskbar icons ---------- */

const Edge = (
  <Svg w={30}>
    <defs><linearGradient id="edA" x1="0" y1="0.3" x2="1" y2="0.2"><stop offset="0" stopColor="#1b9de2" /><stop offset="1" stopColor="#5bdc5a" /></linearGradient></defs>
    <circle cx="15" cy="15" r="15" fill="#1377c9" />
    <path d="M.5 13Q2 0 15 0Q29 1 30 13Q29.500 20 21 20Q17 19.500 18.500 17Q19.500 12 14 10Q6 8 .5 13Z" fill="url(#edA)" />
    <path d="M10 14Q7 25 18 26.500Q24 27 27.500 23.500Q23 30 15 30Q8 29 7 21Q7 16 10 14Z" fill="#0c4c9c" />
    <path d="M13.500 13.500Q19 13 18.500 17Q17 20 21.500 20Q27 20 29 17Q28.500 21 27.500 23Q15 26 12 18Q12 15 13.500 13.500Z" fill="#d4d4d4" />
  </Svg>
);
const Folder = (
  <Svg w={28} h={24}>
    <path d="M0 1.500Q0 0 1.500 0H10L12 3H26.500Q28 3 28 4.500V22H0Z" fill="#e8a317" />
    <path d="M0 5H28V21.500Q28 23 26.500 23H1.500Q0 23 0 21.500Z" fill="#ffd667" />
    <path d="M5 24V14.500Q5 12.500 7 12.500H21.500Q23.500 12.500 23.500 14.500V24H18V18.500H10.500V24Z" fill="#3b99dd" />
  </Svg>
);
const Store = (
  <Svg w={29} h={29}>
    <P d="M8.500 5V1.500H20.500V5" s="#35b6f2" w={2} />
    <path d="M0 5H29V25Q29 29 25 29H4Q0 29 0 25Z" fill="#134f86" />
    <path d="M8.500 11.500H14V17H8.500Z" fill="#f25022" /><path d="M15 11.500h5.500V17H15Z" fill="#7fba00" />
    <path d="M8.500 18H14v5.500H8.500Z" fill="#00a4ef" /><path d="M15 18h5.500v5.500H15Z" fill="#ffb900" />
  </Svg>
);
const Outlook = (
  <Svg w={31} h={27}>
    <path d="M6 9L18 0L31 9V23Q31 27 27 27H10Q6 27 6 23Z" fill="#0a5cb8" />
    <path d="M10 8L18 2L28 8L17 17Z" fill="#2b9fe8" />
    <path d="M31 10V23Q31 27 27 27H10Z" fill="#28c0f5" /><path d="M6 14L29 27H10Q6 27 6 23Z" fill="#1180d8" />
    <rect y="7.500" width="15" height="15" rx="2" fill="#0f5fb5" />
    <ellipse cx="7.500" cy="15" rx="3.600" ry="4" stroke="#fff" strokeWidth="2" />
  </Svg>
);
const Git = (
  <Svg w={30}>
    <g transform="rotate(45 15 15)">
      <rect x="4.500" y="4.500" width="10" height="10" rx="1" fill="#fa8080" /><rect x="15.500" y="4.500" width="10" height="10" rx="1" fill="#8fd16f" />
      <rect x="4.500" y="15.500" width="10" height="10" rx="1" fill="#80b3ff" /><rect x="15.500" y="15.500" width="10" height="10" rx="1" fill="#ffdd80" />
    </g>
    <P d="M12 5L15 9V22M15 11L20 15" s="#f4ecec" w={1.300} />
    <circle cx="15" cy="10" r="1.600" fill="#fff" /><circle cx="15" cy="22" r="1.600" fill="#fff" /><circle cx="20" cy="15" r="1.600" fill="#fff" />
  </Svg>
);
const Chrome = (
  <Svg w={30}>
    <circle cx="15" cy="15" r="15" fill="#fcc934" />
    <path d="M15 15L2 7.500A15 15 0 0 1 28 7.500L28 8H15Z" fill="#ea4335" />
    <path d="M2 7.500A15 15 0 0 0 14.500 30L21.500 18.500L15 15L8.500 18.500Z" fill="#2da94f" />
    <circle cx="15" cy="15" r="7.200" fill="#fff" /><circle cx="15" cy="15" r="5.600" fill="#1a73e8" />
  </Svg>
);
const PowerBi = (
  <Svg w={30}>
    <rect width="30" height="30" fill="#0078d4" />
    <rect x="16" y="5.500" width="7" height="19.500" rx="1" fill="#e8ad0c" /><rect x="11.500" y="10.500" width="7" height="14.500" rx="1" fill="#f5c736" />
    <rect x="7" y="15.500" width="7" height="9.500" rx="1" fill="#fbe07a" />
  </Svg>
);

/* ---------- page ---------- */

const TABS = [["File", 26, 47], ["Home", 48, 39], ["Insert", 43, 40], ["Modeling", 74, 40], ["View", 36, 39], ["Optimize", 71, 38], ["Help", 37, 0]];

function RibbonItem({ data }) {
  const [icon, w, a, aw, b, bw, chev, off] = data;
  return (
    <Item $w={w} $off={off}>
      <Svg w={44}>{ribbon[icon]}</Svg>
      <ItemLine><Text $size={14} fit={aw}>{a}</Text></ItemLine>
      <ItemLine>
        {b && <Text $size={14} $drop={1} fit={bw}>{b}</Text>}
        {chev && <Chevron color={off ? "#b3b0ad" : DARK} />}
      </ItemLine>
    </Item>
  );
}

function Kpi({ box, value, vw, name, nw }) {
  return (
    <KpiCard $box={box}>
      <KpiValue><Text $din $size={54} $weight={500} $squeeze={0.86} fit={vw}>{value}</Text></KpiValue>
      <KpiName><Text $size={29} fit={nw}>{name}</Text></KpiName>
    </KpiCard>
  );
}

const Title = ({ w, children }) => (
  <VisualTitle><Text $din $size={17} $weight={500} $squeeze={0.94} fit={w}>{children}</Text></VisualTitle>
);

export default function App() {
  return (
    <Window>
      <Global />
      <TitleBar>
        <LoadStrip />
        <Slot $w={19} $ml={21}>
          <Svg w={20}><P d="M.7 .7H19.300V19.300H3.500L.7 16.500ZM4.500 .7V8.500H15.500V.7M5.500 19V12.500H14.500V19M8.500 19V15.500" s="#f3f2f1" w={1.300} /></Svg>
        </Slot>
        <Slot $w={16} $ml={20}>
          <Svg w={16} h={20}><P d="M1 1V8H8M1.500 7.500Q5 1.500 10.500 3Q15.500 5 15 10Q14 14 7 19.500" s="#f3f2f1" w={1.300} /></Svg>
        </Slot>
        <Slot $w={16} $ml={21}>
          <Svg w={16} h={20}><P d="M15 1V8H8M14.500 7.500Q11 1.500 5.500 3Q.5 5 1 10Q2 14 9 19.500" s="#797775" w={1.300} /></Svg>
        </Slot>
        <Slot $w={351} $ml={13} $mt={6}>
          <Text $size={14} fit={351}>TASK DASHBOARD • Last saved: 6/3/2025 at 7:21 PM</Text>
        </Slot>
        <Slot $w={11} $ml={8} $mt={2}><Svg w={10} h={6}><path d="M0 0H10L5 5.500Z" fill="#fff" /></Svg></Slot>
        <Slot $w={500} $ml={347}>
          <TitleSearch>
            <Lens color="#3b3a39" />
            <Text $size={17} $drop={1} fit={51}>Search</Text>
          </TitleSearch>
        </Slot>
        <Slot $w={46} $ml={310}><Text $size={14} fit={46}>Sign in</Text></Slot>
        <Slot $w={25} $ml={12}>
          <Svg w={25}><circle cx="12.500" cy="12.500" r="12.300" fill="#fff" /><circle cx="12.500" cy="7" r="3.600" stroke="#252423" strokeWidth="1.600" /><P d="M6 13.500H19V15Q18 20.500 12.500 20.500T6 15Z" s="#252423" w={1.700} strokeLinejoin="round" /></Svg>
        </Slot>
        <Slot $w={14} $ml={40} $mt={2}><Svg w={14}><P d="M0 7H13" s="#fff" w={1.200} /></Svg></Slot>
        <Slot $w={14} $ml={41} $mt={3}><Svg w={14}><R b={[1, 1, 12, 12]} rx="1.500" s="#fff" w={1.300} /></Svg></Slot>
        <Slot $w={14} $ml={41} $mt={3}><Svg w={14}><P d="M.5 .5L13.500 13.500M13.500 .5L.5 13.500" s="#fff" w={1.300} /></Svg></Slot>
      </TitleBar>

      <Ribbon>
        <TabRow>
          {TABS.map(([t, w, gap]) => (
            <Tab key={t} $w={w} $gap={gap} $active={t === "Home"}>
              <Text $size={16.5} $weight={t === "Home" ? 700 : 400} fit={w}>{t}</Text>
            </Tab>
          ))}
          <ShareButton>
            <Svg w={21} h={19}><P d="M5 4.500H1.200V17.800H16V14" s="#fff" w={1.400} /><P d="M5 14Q6 7 13 6.500V2L20 7.800L13 13V9.500Q8 9.500 5 14Z" s="#fff" w={1.400} /></Svg>
            <Text $size={14.5} fit={37} $ml={4}>Share</Text>
            <Chevron color="#fff" w={13} sw={1.500} />
          </ShareButton>
        </TabRow>
        <Groups>
          <Group $w={201}>
            <GroupItems $pl={12}>
              <Item $w={46} $off>
                <Svg w={44}>
                  <R b={[8.500, 7.700, 25, 30]} f="#fff" s="#f9dcae" w={2.500} />
                  <P d="M15 10.500V6.500H18.500Q19 3.500 21.500 3.500T24.500 6.500H28V10.500Z" f="#fff" s="#c8c6c4" />
                  <R b={[25, 18.500, 17, 22]} f="#fff" s="#b3b0ad" w={1.700} />
                </Svg>
                <ItemLine><Text $size={14} fit={35}>Paste</Text></ItemLine>
              </Item>
              <ClipCommands>
                <ClipCommand>
                  <Svg w={19} h={20}><P d="M4 .5L12.500 14M12 .5L4 14" s="#a19f9d" w={1.300} /><circle cx="4.300" cy="16" r="2.500" stroke="#a9cde8" strokeWidth="1.500" /><circle cx="12.300" cy="16" r="2.500" stroke="#a9cde8" strokeWidth="1.500" /></Svg>
                  <Text $size={14} fit={22} $ml={1}>Cut</Text>
                </ClipCommand>
                <ClipCommand>
                  <Svg w={20} h={20}><P d="M11 14.500H.7V.7H6.500L9.500 3.500" s="#b3b0ad" w={1.300} /><P d="M7.700 5H14L19 10V19.300H7.700ZM14 5V10H19M10 13H16.500M10 16H16.500" s="#b3b0ad" w={1.200} f="#fff" /></Svg>
                  <Text $size={14} fit={34}>Copy</Text>
                </ClipCommand>
                <ClipCommand>
                  <Svg w={20} h={20}><P d="M.8 9L5.500 7L13.500 14L9.500 18.500Q4 15 .8 9Z" f="#fdebd0" s="#f3c998" w={1.400} /><P d="M7 6L10 3.500L16.500 10L13.500 13ZM12 5L17.500 .8L19 2.500L15 8" s="#b3b0ad" w={1.400} f="#fff" /></Svg>
                  <Text $size={14} fit={98}>Format painter</Text>
                </ClipCommand>
              </ClipCommands>
            </GroupItems>
            <GroupCaption><Text $size={12} fit={54}>Clipboard</Text></GroupCaption>
          </Group>
          {GROUPS.map((g) => (
            <Group key={g.name} $w={g.w}>
              <GroupItems $pl={g.pl}>{g.items.map((d) => <RibbonItem key={d[0]} data={d} />)}</GroupItems>
              <GroupCaption><Text $size={12} fit={g.nw}>{g.name}</Text></GroupCaption>
            </Group>
          ))}
          <Collapse><Svg w={11} h={8}><P d="M1 6.500L5.500 1.500L10 6.500" w={1.800} /></Svg></Collapse>
        </Groups>
      </Ribbon>

      <Body>
        <Rail>
          <RailItem $active $h={50}>
            <Svg w={20} h={18}><P d="M1.700 0V16.300H18.500" s={INK} w={1.500} /><R b={[4.500, 3.500, 3, 10.500]} s={INK} w={1.300} /><R b={[9, 7, 3, 7]} s={INK} w={1.300} /><R b={[13.500, 1.500, 3.200, 12.500]} s={INK} w={1.300} /></Svg>
          </RailItem>
          <RailItem $h={47}>
            <Svg w={21} h={19}><R b={[.7, .7, 19.600, 17.600]} s="#797775" /><P d="M1 4H20M1 9H20M1 13.500H20M7.300 4V18M13.700 4V18" s="#797775" w={1.200} /></Svg>
          </RailItem>
          <RailItem $h={55}>
            <Svg w={23} h={23}><R b={[.7, 7, 9, 9]} s="#797775" /><R b={[13, .7, 9.300, 9]} s="#797775" /><R b={[13, 13.300, 9.300, 9]} s="#797775" /><P d="M.7 10H9.700M13 3.700H22.300M13 16.500H22.300M4.500 7V3.500H13M7 16V19.500H13" s="#797775" w={1.200} /></Svg>
          </RailItem>
          <RailItem $h={46}>
            <Svg w={23} h={22}>
              <P d="M5 13V1H12.500L18 6.500V15M12.500 1V6.500H18M20.500 9Q22 16 18.500 19.500" s="#797775" w={1.300} />
              <text x="-1" y="20" fontFamily={UI} fontWeight="700" fontSize="8" fill="#797775" textLength="17">DAX</text>
            </Svg>
          </RailItem>
        </Rail>

        <Work>
          <Stage>
            <CanvasArea>
              <ReportPage>
                <Kpi box={[112, 229, 235, 127]} value="391.72K" vw={193} name="TOTAL SALES" nw={167} />
                <Kpi box={[362, 227, 206, 128]} value="1620" vw={114} name="TOTAL ORDER" nw={181} />
                <Kpi box={[590, 227, 246, 127]} value="6209" vw={116} name="TOTAL QUANTITY" nw={226} />

                <RoundedShape $box={[112, 363, 106, 471]} />
                <Visual $box={[113, 377, 104, 429]}>
                  <Title w={53}>Region</Title>
                  <TileList $gap={7} $pad="0 9px 10px 8px">
                    {[["Central", 48], ["East", 29], ["South", 38], ["West", 32]].map(([t, w]) => (
                      <Tile key={t} $on={t === "South"}>
                        <Text $din $size={14} $weight={t === "South" ? 500 : 400} fit={w}>{t}</Text>
                      </Tile>
                    ))}
                  </TileList>
                </Visual>

                <Visual $box={[226, 363, 429, 230]}><Title w={123}>Sales Over Time</Title><LineChart /></Visual>
                <Visual $box={[667, 363, 339, 230]}>
                  <Title w={137}>Sales by Category</Title>
                  <DonutBody>
                    <Svg w={152}>
                      <path d={arc(0, 136.6)} fill="#118dff" />
                      <path d={arc(136.6, 252.3)} fill="#e66c37" />
                      <path d={arc(252.3, 360)} fill="#12239e" />
                    </Svg>
                    <Legend>
                      <LegendRow $h={34}><Text $size={22} $weight={700} fit={87}>Categ...</Text></LegendRow>
                      <LegendRow><Dot $c="#118dff" /><Text $size={22} fit={51}>Tec...</Text></LegendRow>
                      <LegendRow><Dot $c="#e66c37" /><Text $size={22} fit={56}>Offi...</Text></LegendRow>
                      <LegendRow><Dot $c="#12239e" /><Text $size={22} fit={65}>Furn...</Text></LegendRow>
                    </Legend>
                  </DonutBody>
                </Visual>
                <Visual $box={[226, 599, 429, 234]}><Title w={120}>Sales by Region</Title><BarChart /></Visual>
                <Visual $box={[664, 599, 342, 234]}>
                  <Title w={68}>Category</Title>
                  <TileList $row $gap={7} $pad="0 12px 11px 8px">
                    {[["Furniture", 61], ["Office Sup...", 74], ["Technology", 73]].map(([t, w]) => (
                      <Tile key={t}><Text $din $size={14} fit={w}>{t}</Text></Tile>
                    ))}
                  </TileList>
                </Visual>
              </ReportPage>
            </CanvasArea>
            <FilterRail>
              <Mirror><Double /></Mirror>
              <Slot $w={14} $mt={19} $ml={6}><Svg w={14} h={16}><P d="M13 1V15L7 10.500H1V5.500H7Z" s={INK} w={1.400} strokeLinejoin="round" /></Svg></Slot>
              <Slot $w={25} $mt={10} $ml={1}><VText $size={18.5} $weight={600}>Filters</VText></Slot>
            </FilterRail>
          </Stage>
          <PageTabs>
            <ViewSwitch>
              <ViewMode $active $ml={12} $pt={8}>
                <Svg w={24} h={19}><R b={[.8, .8, 22.400, 13]} s="#605e5c" w={1.600} /><P d="M12 14V17.500M8 17.700H16" s="#605e5c" /></Svg>
              </ViewMode>
              <ViewMode $ml={26} $pt={6}>
                <Svg w={16} h={25}><R b={[.8, .8, 14.400, 23.400]} rx="1" s="#605e5c" w={1.600} /><P d="M7 21H9" s="#605e5c" /></Svg>
              </ViewMode>
              <Slot $w={6} $ml={18}><Svg w={6} h={11}><path d="M5.500 0V11L0 5.500Z" fill="#c8c6c4" /></Svg></Slot>
              <Slot $w={6} $ml={23}><Svg w={6} h={11}><path d="M0 0V11L5.500 5.500Z" fill="#c8c6c4" /></Svg></Slot>
            </ViewSwitch>
            <PageTab $w={95}><Text $size={14.5} fit={44}>Page 1</Text></PageTab>
            <PageTab $w={124} $active><Text $size={14.5} $weight={600} fit={72}>dashboard</Text></PageTab>
            <AddPage><Svg w={14}><P d="M7 0V14M0 7H14" s="#fff" w={3} /></Svg></AddPage>
          </PageTabs>
        </Work>

        <Pane $w={226}>
          <PaneHead><Text $size={18} $weight={600} fit={123}>Visualizations</Text><Double /></PaneHead>
          <Slot $w={100} $ml={10} $mt={-2}><Text $size={14} $weight={600} fit={77}>Build visual</Text></Slot>
          <BuildRow>
            <BuildTab $active>
              <Svg w={30} h={32}>
                <P d="M0 1.500H24" w={1.500} />
                <rect x="1" y="8" width="28" height="9" fill={GREEN} stroke={INK} strokeWidth="1.600" strokeDasharray="2.500 1.500" />
                <rect x="1" y="21.500" width="28" height="9" fill={GREEN} stroke={INK} strokeWidth="1.600" strokeDasharray="2.500 1.500" />
              </Svg>
            </BuildTab>
            <BuildTab>
              <Svg w={32} h={32}>
                <P d="M7 30H2V1.500H14L22 9.500V13M14 1.500V9.500H22" s={INK} w={1.600} />
                <P d="M31 12L18 26M31 12L16 23.500M16 23.500Q11.500 24 11.500 29H8Q14 32.500 18.500 29Q19.500 26 16 23.500Z" s={INK} w={1.600} f={PANEL} strokeLinejoin="round" />
              </Svg>
            </BuildTab>
          </BuildRow>
          <Svg w={225} h={17}><P d="M0 15.700H20L30.500 6.500L40.500 15.700H225" s="#8a8886" w={1.200} /></Svg>
          <IconGrid>{gallery.map((g, i) => <Svg key={i} w={24}>{g}</Svg>)}</IconGrid>
          <Ellipsis><i /><i /><i /></Ellipsis>
          <Wells>
            <WellLabel $h={21}><Text $size={14} fit={42}>Values</Text></WellLabel>
            <Well $h={35} $mt={6} $pl={12}><Text $size={14} fit={133}>Add data fields here</Text></Well>
            <Slot $w={1} $mt={13} />
            <WellLabel $h={20}><Text $size={14} $weight={600} $color="#484644" fit={87}>Drill through</Text></WellLabel>
            <WellLabel $h={42}><Text $size={14} fit={83}>Cross-report</Text><Toggle><i /><Text $size={11} fit={16}>Off</Text></Toggle></WellLabel>
            <WellLabel $h={27}><Text $size={14} fit={92}>Keep all filters</Text><Toggle $on><i /><Text $size={11} fit={15}>On</Text></Toggle></WellLabel>
            <Well $h={32} $mt={10} $pl={10}><Text $size={14} fit={188}>Add drill-through fields here</Text></Well>
          </Wells>
        </Pane>

        <Pane $w={226}>
          <PaneHead><Text $size={18} $weight={600} fit={42}>Data</Text><Double /></PaneHead>
          <FieldSearch>
            <Svg w={18}><circle cx="7.500" cy="7.500" r="6.700" stroke="#616161" strokeWidth="1.300" /><P d="M12.300 12.300L17.300 17.300" s="#616161" w={1.300} /></Svg>
            <Text $size={16} $drop={3} fit={51}>Search</Text>
          </FieldSearch>
          <FieldArea>
            <FieldList>
              {FIELDS.map(([t, w, ic, open]) => (
                <Field key={t}>
                  <span>{open && <Svg w={9} h={15}><P d="M.7 .7L7.800 7.500L.7 14.300" s="#484644" w={1.300} /></Svg>}</span>
                  <Checkbox />
                  <span>{ic && fieldIcon[ic]}</span>
                  <Text $size={14} $drop={1} fit={w}>{t}</Text>
                </Field>
              ))}
            </FieldList>
            <Scroll />
          </FieldArea>
        </Pane>
      </Body>

      <StatusBar>
        <Text $size={14} $drop={2} fit={74}>Page 2 of 2</Text>
        <Zoom>
          <Svg w={154} h={18}>
            <P d="M1 9H7M145 9H154M149.500 4.500V13.500" s="#484644" w={1.900} />
            <P d="M13 9.500H138" s="#605e5c" w={1.200} /><P d="M75.500 5.500V12.500" s="#605e5c" w={1.200} />
            <rect x="60" y="3" width="5" height="13" fill="#605e5c" />
          </Svg>
          <Text $size={14} $ml={17} $color="#797775" fit={28}>81%</Text>
          <Slot $w={21} $ml={24} $mt={1}>
            <Svg w={21} h={17}><R b={[.8, .8, 19.400, 14.900]} s="#797775" w={1.600} /><P d="M3.500 6V3.500H7M14 3.500H17.500V6M17.500 10.500V13H14M7 13H3.500V10.500" s="#605e5c" w={1.200} /></Svg>
          </Slot>
        </Zoom>
      </StatusBar>

      <Taskbar>
        <Slot $w={20} $ml={20}>
          <Svg w={20}><path d="M0 3L8.500 1.500V9.500H0ZM9.500 1.300L20 0V9.500H9.500ZM0 10.500H8.500V18.500L0 17ZM9.500 10.500H20V20L9.500 18.700Z" fill="#000" /></Svg>
        </Slot>
        <TaskSearch><Lens w={20} color="#111" /><Text $size={16.5} $drop={1} $color="#3b3a39" fit={163}>Type here to search</Text></TaskSearch>
        <Slot $w={20} $ml={21}>
          <Svg w={20} h={20}><P d="M.7 0V4H14V0M.7 20V16H14V20M.7 6.500H14V13.500H.7ZM18.500 0V4M18.500 11V20" s="#111" w={1.300} /><rect x="17" y="6" width="3" height="3" fill="#111" /></Svg>
        </Slot>
        <Slot $w={23} />
        <TaskButton>{Edge}</TaskButton>
        <TaskButton>{Folder}</TaskButton>
        <TaskButton>{Store}</TaskButton>
        <TaskButton>{Outlook}</TaskButton>
        <TaskButton>{Git}</TaskButton>
        <TaskButton><OpenMark>{Chrome}</OpenMark></TaskButton>
        <TaskButton $active>{PowerBi}</TaskButton>
        <Slot $w={25} $ml={448}>
          <Svg w={25} h={30}>
            <path d="M4 0L21 4V26L4 30Z" fill="#c9501c" />
            <P d="M0 8Q6 5 12 8T25 9M0 13Q6 10 12 13T25 14M0 18Q6 15 12 18T25 19M0 23Q6 20 12 23T25 23" s="#f08a4b" w={2} />
          </Svg>
        </Slot>
        <Slot $w={148} $ml={12}><Text $size={17} $drop={1} fit={148}>Air quality forecast</Text></Slot>
        <Slot $w={16} $ml={32}><Svg w={16} h={9}><P d="M.7 8.300L8 1L15.300 8.300" s="#111" w={1.400} /></Svg></Slot>
        <Slot $w={15} $ml={15}><Svg w={15} h={18}><R b={[1, 4, 8.500, 10]} rx="1.500" s="#111" w={1.300} /><P d="M9.500 8L13.500 5V13L9.500 10M2 1.500Q6 -.5 10 1.500M2 16.500Q6 18.500 10 16.500" s="#111" w={1.200} /></Svg></Slot>
        <Slot $w={20} $ml={13}><Svg w={20} h={11}><R b={[.7, .7, 16.600, 9.600]} s="#111" w={1.300} /><rect x="2.500" y="2.500" width="10" height="6" fill="#111" /><rect x="18" y="3.500" width="1.500" height="4" fill="#111" /></Svg></Slot>
        <Slot $w={20} $ml={9}><Svg w={21} h={17}><P d="M.7 5.500H3.500L7.500 1.500V15.500L3.500 11.500H.7ZM10.500 5.500Q12 8.500 10.500 11.500M13.500 3.500Q16 8.500 13.500 13.500M16.500 1Q20.500 8.500 16.500 16" s="#111" w={1.200} /></Svg></Slot>
        <Slot $w={16} $ml={12}><Svg w={16} h={16}><P d="M.7 15Q1 2 15 1M4.500 15Q5 6 15 5M8 15Q8.500 9.500 15 9" s="#333" w={1.300} /><circle cx="13.500" cy="13.500" r="1.600" fill="#111" /></Svg></Slot>
        <Stack $w={30} $ml={15}><Text $size={14} fit={28}>ENG</Text><Text $size={14} fit={14}>IN</Text></Stack>
        <Stack $w={70} $ml={14}><Text $size={14} fit={51}>1:58 PM</Text><Text $size={14} fit={67}>6/14/2025</Text></Stack>
        <Slot $w={32} $ml={21}>
          <Svg w={32} h={34}>
            <path d="M0 4H20V20H8L4 23V20H0Z" fill="#000" /><P d="M3.500 8H16.500M3.500 12H16.500M3.500 16H10" s="#d4d4d4" w={1.200} />
            <circle cx="20" cy="23" r="9.700" fill="#d4d4d4" stroke="#797775" strokeWidth="1.200" />
            <text x="20" y="27.500" textAnchor="middle" fontFamily={UI} fontWeight="600" fontSize="13" fill="#111">6</text>
          </Svg>
        </Slot>
      </Taskbar>
    </Window>
  );
}
